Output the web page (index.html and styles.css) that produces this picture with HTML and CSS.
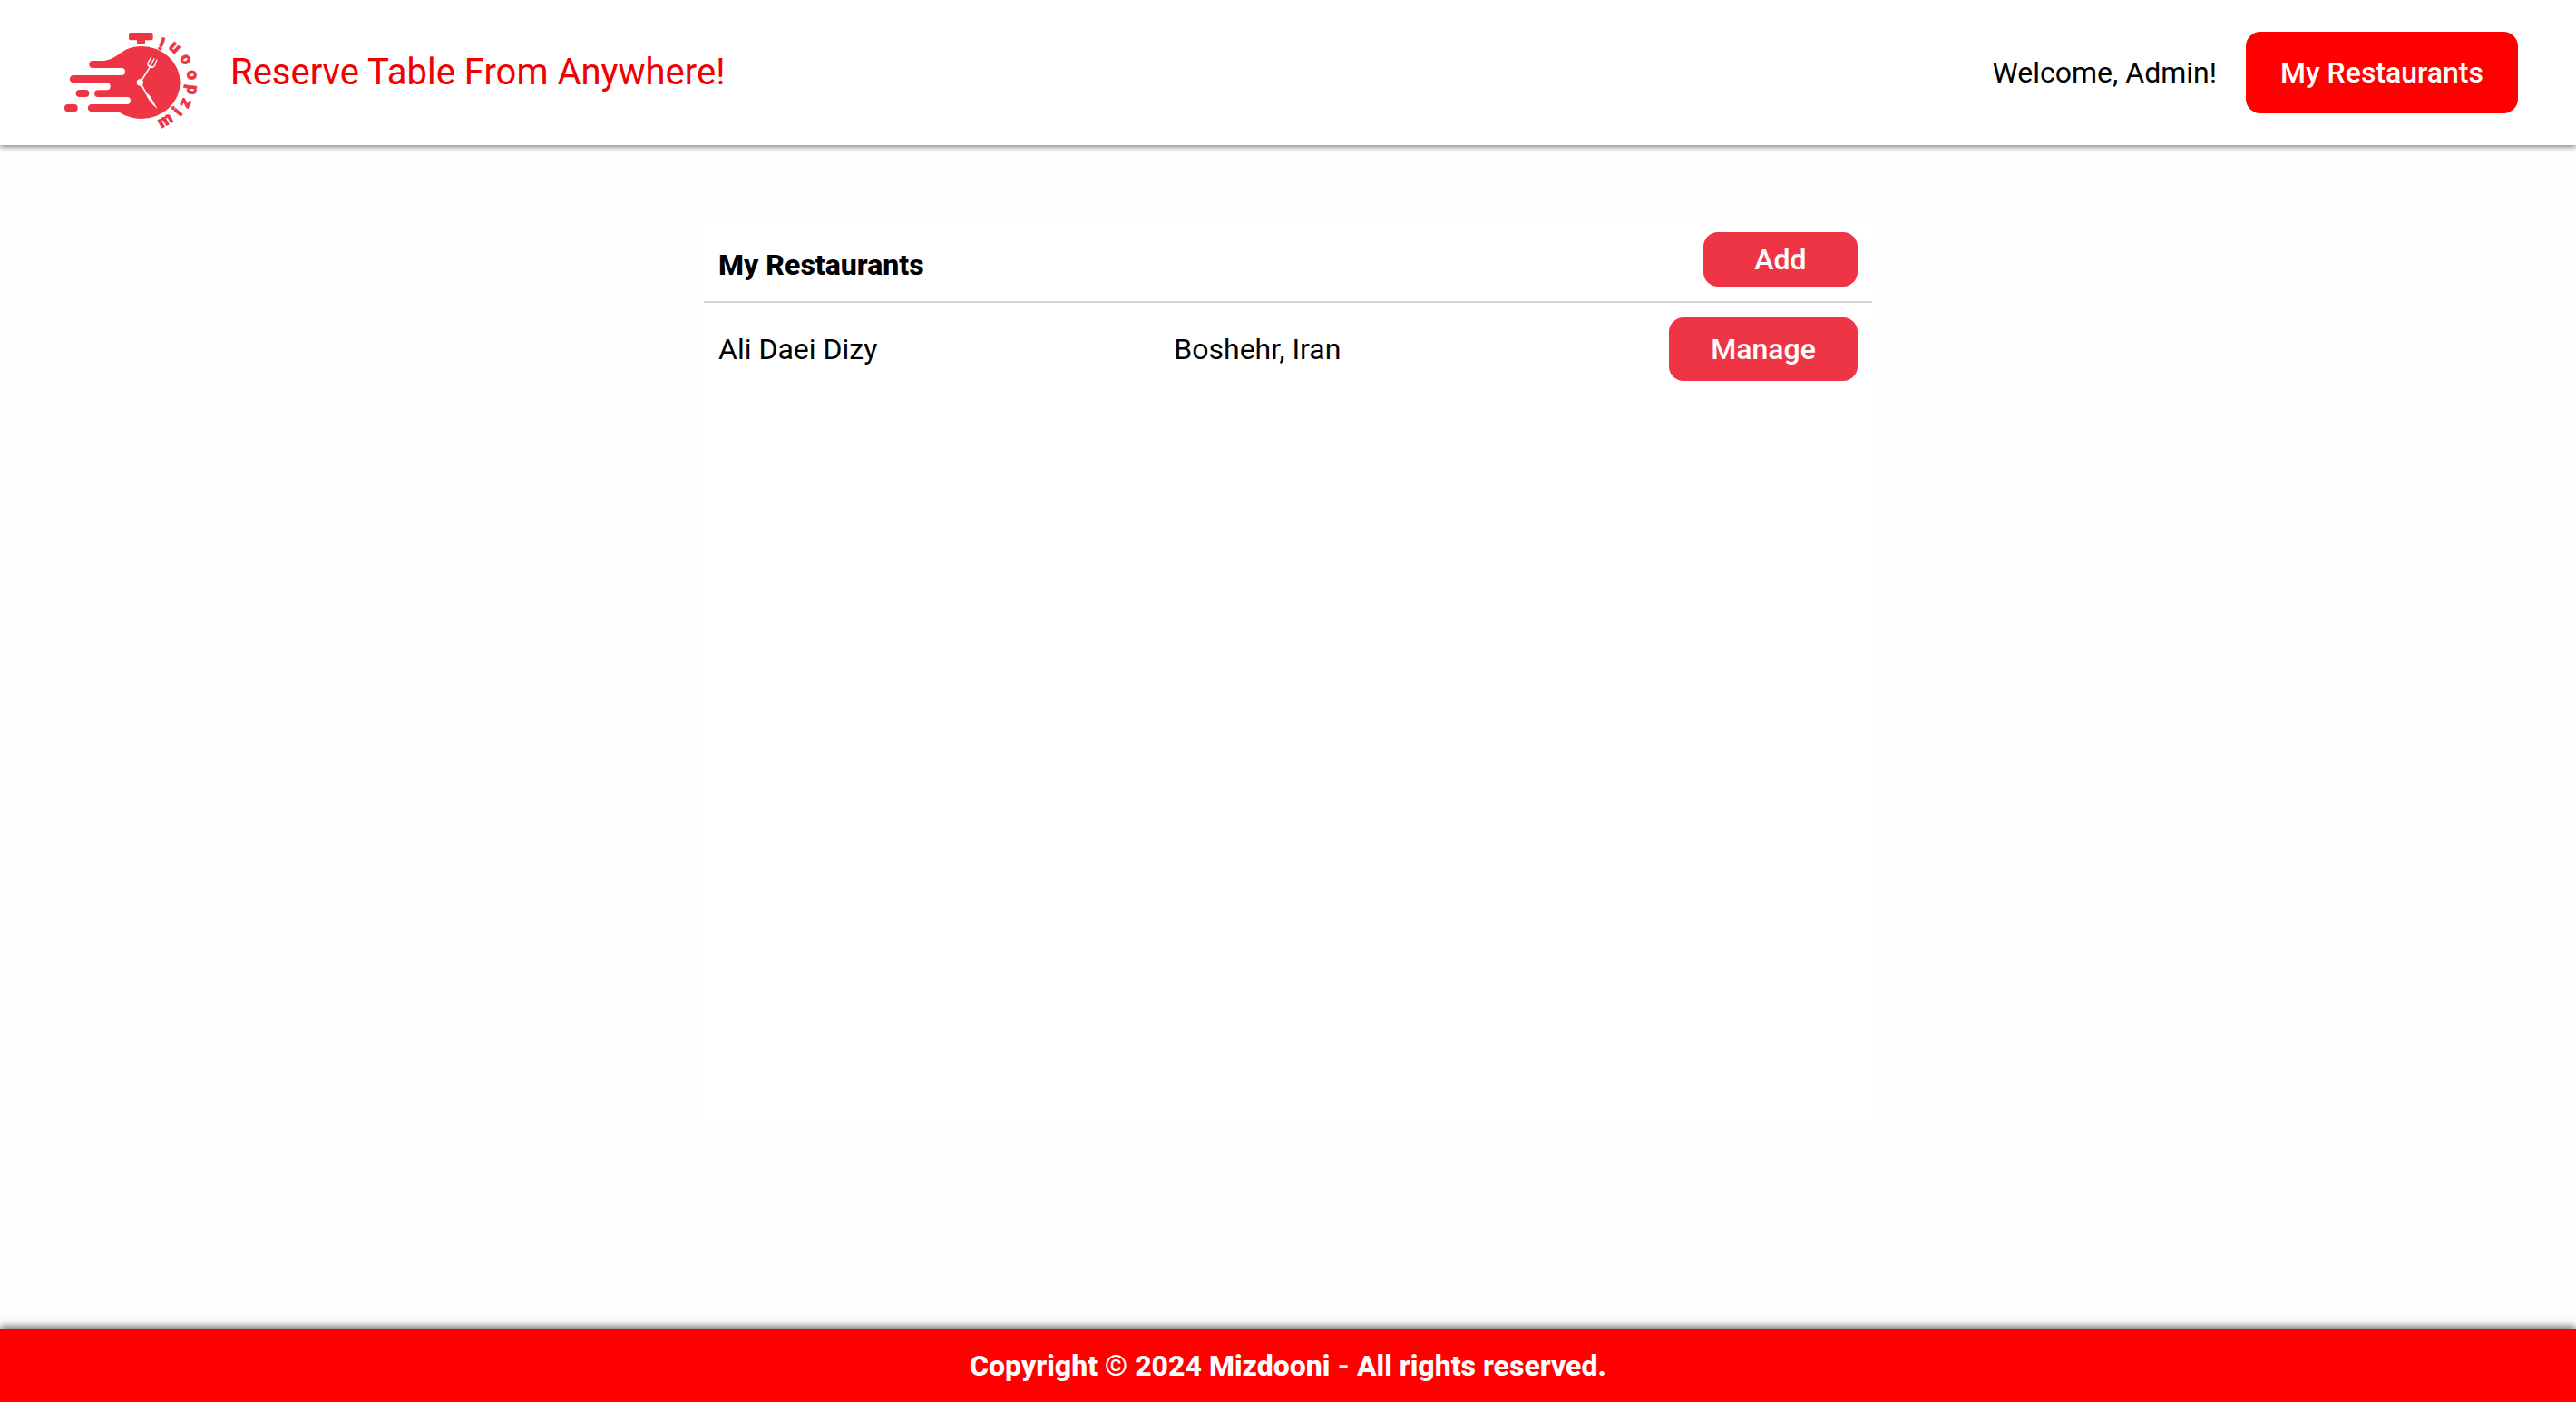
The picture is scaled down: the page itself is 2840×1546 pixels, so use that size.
FILE: index.html
```html
<!DOCTYPE html>
<html lang="en">
<head>
  <meta charset="utf-8">
  <title>Mizdooni</title>
  <link rel="stylesheet" href="styles.css">
</head>
<body>
  <header class="site-header">
    <a class="brand" href="#">
      <svg class="logo" viewBox="0 -60 570 480" role="img" aria-label="Mizdooni logo">
        <g class="logo-shape">
          <rect x="276" y="48" width="80" height="25" rx="6"/>
          <path d="M303 70H330V82Q330 87 325 87H308Q303 87 303 82Z"/>
          <path d="M157 141H190C240 139 250 93 317 93A129 120 0 0 1 317 333C285 333 262 322 242 310H153a12 12 0 0 1 0-25H270a12 12 0 0 0 0-24H174a11 11 0 0 1 0-23H203a12 12 0 0 0 0-24H93a12 12 0 0 1 0-25H252a12 12 0 0 0 0-24H157a12 12 0 0 1 0-24Z"/>
          <rect x="101" y="237" width="44" height="24" rx="12"/>
          <rect x="63" y="285" width="44" height="25" rx="12"/>
        </g>
        <g class="logo-hands">
          <circle cx="313" cy="213" r="11"/>
          <path d="M315 211L345 163" stroke-width="5"/>
          <path d="M339 149Q338 158 345 162Q354 165 361 158L369 138M339 149L350 130M349 155L360 134" stroke-width="4"/>
          <path d="M342 154L357 161L350 167L343 163Z"/>
          <path d="M315 215L334 250" stroke-width="5"/>
          <path d="M331 249L341 251Q353 266 371 301Q344 279 331 249Z"/>
        </g>
        <g class="logo-name">
          <text transform="translate(397 340) rotate(-30)" y="15">m</text>
          <text transform="translate(439 311) rotate(-49)" y="15">i</text>
          <text transform="translate(464 281) rotate(-64)" y="15">z</text>
          <text transform="translate(484 237) rotate(-83)" y="15">d</text>
          <text transform="translate(484 188) rotate(-98)" y="15">o</text>
          <text transform="translate(463 137) rotate(-118)" y="15">o</text>
          <text transform="translate(427 98) rotate(-138)" y="15">n</text>
          <text transform="translate(387 80) rotate(-160)" y="15">i</text>
        </g>
      </svg>
      <span class="tagline">Reserve Table From Anywhere!</span>
    </a>
    <div class="account">
      <span>Welcome, Admin!</span>
      <button class="btn btn-nav" type="button">My Restaurants</button>
    </div>
  </header>

  <main class="content">
    <section class="card">
      <div class="card-header">
        <h1 class="card-title">My Restaurants</h1>
        <button class="btn btn-add" type="button">Add</button>
      </div>
      <table class="restaurants">
        <tbody>
          <tr>
            <td class="name">Ali Daei Dizy</td>
            <td>Boshehr, Iran</td>
            <td class="action"><button class="btn btn-manage" type="button">Manage</button></td>
          </tr>
        </tbody>
      </table>
    </section>
  </main>

  <footer class="site-footer">Copyright © 2024 Mizdooni - All rights reserved.</footer>
</body>
</html>
```
FILE: styles.css
```css
* {
  box-sizing: border-box;
}

body {
  margin: 0;
  min-height: 100vh;
  display: flex;
  flex-direction: column;
  background: #fffcfd;
  color: #000;
  font-family: Roboto, "Liberation Sans", sans-serif;
  font-size: 32px;
  line-height: 48px;
}

.site-header {
  display: flex;
  justify-content: space-between;
  align-items: center;
  padding: 0 64px 0 50px;
  background: #fff;
  box-shadow: 0 2px 6px rgba(0, 0, 0, 0.5);
}

.brand {
  display: flex;
  align-items: center;
  gap: 14px;
  color: #f00000;
  text-decoration: none;
}

.logo {
  width: 190px;
  height: 160px;
}

.logo-shape {
  fill: #ed3545;
}

.logo-hands {
  fill: #fff;
}

.logo-hands path {
  stroke: #fff;
  stroke-linecap: round;
}

.logo-hands path:not([stroke-width]) {
  stroke: none;
}

.logo-hands path:nth-of-type(2) {
  fill: none;
}

.logo-name {
  fill: #ed3545;
  stroke: #ed3545;
  stroke-width: 2px;
  stroke-linejoin: round;
  font-size: 56px;
  font-weight: 900;
  text-anchor: middle;
}

.tagline {
  font-size: 40px;
}

.account {
  display: flex;
  align-items: center;
  gap: 32px;
}

.btn {
  border: 0;
  border-radius: 16px;
  background: #ed3545;
  color: #fff;
  font: inherit;
  font-weight: 500;
  cursor: pointer;
}

.btn-nav {
  width: 300px;
  height: 90px;
  background: #f00;
}

.btn-add {
  width: 170px;
  height: 60px;
}

.btn-manage {
  width: 208px;
  height: 70px;
}

.content {
  flex: 1;
  padding: 80px 16px;
}

.card {
  max-width: 1288px;
  min-height: 1000px;
  margin: 0 auto;
  background: #fff;
}

.card-header {
  display: flex;
  justify-content: space-between;
  align-items: flex-end;
  padding: 16px;
  border-bottom: 2px solid #d3d3d3;
}

.card-title {
  margin: 0;
  font-size: 32px;
  font-weight: 800;
}

.restaurants {
  width: 100%;
  border-collapse: collapse;
}

.restaurants td {
  padding: 16px;
}

.restaurants .name {
  width: 39%;
}

.restaurants .action {
  text-align: right;
}

.restaurants .btn {
  display: block;
  margin-left: auto;
}

.site-footer {
  padding: 16px;
  background: #f00;
  box-shadow: 0 -3px 8px rgba(0, 0, 0, 0.6);
  color: #fff;
  font-weight: 800;
  text-align: center;
}
```
